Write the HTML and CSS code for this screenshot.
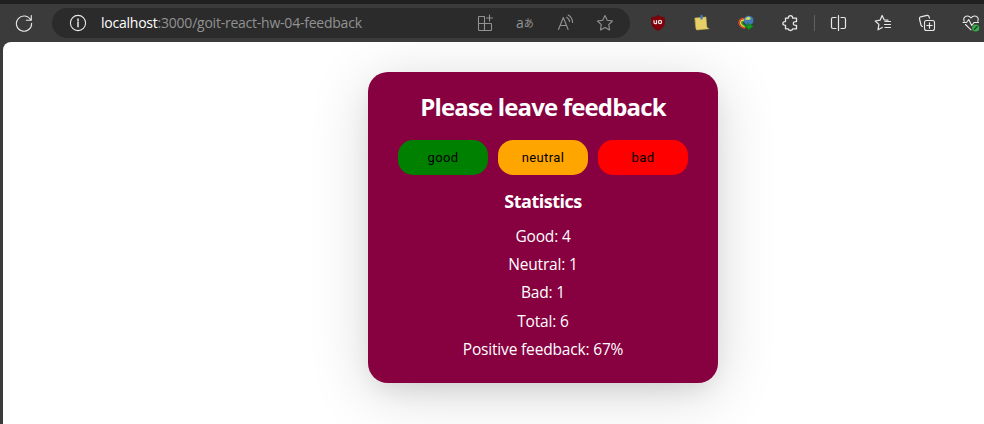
FILE: index.html
```html
<!DOCTYPE html>
<html lang="en">
<head>
<meta charset="utf-8">
<title>Feedback</title>
<link rel="stylesheet" href="styles.css">
</head>
<body>
<header class="toolbar">
  <svg class="icon reload" viewBox="0 0 18 18"><path d="M15.8 6.2A7.6 7.6 0 1 0 16.6 9.3M16.3 1.5v4.8h-5"/></svg>
  <div class="address">
    <svg class="icon info" viewBox="0 0 18 18"><circle cx="9" cy="9" r="7.6"/><path d="M9 8v4.8M9 5v1.4" stroke-width="1.5"/></svg>
    <span class="url"><b>localhost</b>:3000/goit-react-hw-04-feedback</span>
    <svg class="icon dim apps" viewBox="0 0 18 18"><path d="M8.500 2.500H3.200Q2.500 2.500 2.500 3.200V15.800q0 .7.700.7H14.800q.7 0 .7-.7V10.200q0-.7-.7-.7H2.500M8.500 2.500v14M13.500 1v6M10.500 4h6"/></svg>
    <span class="translate"><span>a</span><span class="kana">あ</span></span>
    <svg class="icon dim read" viewBox="0 0 18 18"><path d="M2.500 15.500 7.300 3.500l4.800 12M4.200 11.500h6.300M10.700 3.200q2.400 1.500 2.900 4.400M12.200 1q4 2.200 4.400 7.400"/></svg>
    <svg class="icon dim star" viewBox="0 0 18 18"><path d="m9 1.500 2.300 4.800 5.200.7-3.800 3.600.9 5.400L9 13.500 4.400 16l.9-5.400L1.500 7l5.200-.7Z"/></svg>
  </div>
  <div class="extensions">
    <svg class="icon" viewBox="0 0 18 18"><path d="M9 1.500q2.500 1.800 6.500 2v5.200q0 4.800-6.500 7.800-6.500-3-6.500-7.800V3.500Q6.500 3.300 9 1.500Z" fill="#800009" stroke="#6e0309" stroke-width=".5"/><path d="M5 6.500v2.100q0 1 1 1h1.500V6.500" stroke-width="1.200"/><circle cx="11" cy="8" r="1.600" stroke-width="1.200"/></svg>
    <svg class="icon" viewBox="0 0 18 18"><path d="m2 4 11-1 .8 9.500q.4 1.800 2.400 2.300L3.700 16q-1-1-1.100-3.500Z" fill="#e7cf68" stroke="#cdb34d" stroke-width=".5"/><path d="M8.500 2v2.500" stroke="#4276bd" stroke-width="2.300"/></svg>
    <svg class="icon" viewBox="0 0 18 18"><path d="M7.500 4.500Q2 4.500 1.900 9q1 4.300 6 5" stroke="#dd4926" stroke-width="1.400"/><path d="M7.500 6Q3.600 6 3.500 9q1 3 4.500 3.500" stroke="#edda40" stroke-width="1.300"/><path d="M7.500 7.300Q5 7.500 5 9.200q.8 2 3 2.300" stroke="#3aa43a"/><circle cx="11.700" cy="6.500" r="4.800" fill="#3f78b6" stroke="none"/><path d="M8.500 4.500q2-2.300 4-1.500l1.500 2-2.500 1-1.500-.5-1.500 1Z" fill="#c9dd69" stroke="none"/><path d="M6.500 9.500q1.500 2 4.200 2.200V9.300l5.800 3-5.500 3.900v-2q-3.700-.7-4.500-4.700Z" fill="#149b20" stroke="#08710f" stroke-width=".5"/></svg>
    <svg class="icon" viewBox="0 0 18 18"><path d="M4.500 4.200h2.800q.1-2.500 2.200-2.500t2.200 2.500h3.800v3.500q-3.200-.4-3.200 1.800t3.200 1.800v3.500h-3.800q-.1 1.700-2.200 1.700t-2.200-1.700H4.500v-3.500q-2.600 0-2.600-1.900T4.500 7.600Z" stroke-width="1.300"/></svg>
  </div>
  <i class="divider"></i>
  <div class="actions">
    <svg class="icon" viewBox="0 0 18 18"><path d="M8.500 1.500v15M6 3.500H3q-1.500 0-1.500 1.500v8q0 1.500 1.500 1.500h3M11 3.500h3q1.500 0 1.500 1.500v8q0 1.500-1.500 1.500h-3" stroke-width="1.200"/></svg>
    <svg class="icon" viewBox="0 0 18 18"><path d="m14 6.200-3.700-.2-2.200-4.500L6.100 6.200 1.200 7l3.700 3.400-.9 5.400 4.300-2.300M11 7.500h5.500M10.500 10.500h6M11 13.500h5.500" stroke-width="1.200"/></svg>
    <svg class="icon" viewBox="0 0 18 18"><rect x="6.500" y="6.500" width="10" height="10" rx="2"/><path d="M11.500 8.800v5.400M8.800 11.500h5.400M4.500 12.500q-1.200-.2-1.500-1.500L1.500 5q-.3-1.700 1.200-2.200L9 1.400q1.600-.3 2 1.200l.4 1.500" stroke-width="1.200"/></svg>
    <svg class="icon" viewBox="0 0 18 18"><path d="M2.200 7.200Q.8 3.500 4 2.200q3-1 5 1.800 2-2.800 5-1.800 3.200 1.300 1.800 5M1 8.500h3.500L6.700 5.500l3 6L12 8.500h4.500M3.500 10.500 9 15.800"/><circle cx="13.700" cy="14" r="3.600" fill="#38a84b" stroke="none"/><path d="m12.300 15.300 2.800-2.800" stroke="#163b1b"/></svg>
  </div>
</header>
<main class="page">
  <section class="card">
    <h1>Please leave feedback</h1>
    <div class="buttons">
      <button class="good">good</button>
      <button class="neutral">neutral</button>
      <button class="bad">bad</button>
    </div>
    <h2>Statistics</h2>
    <ul>
      <li>Good: 4</li>
      <li>Neutral: 1</li>
      <li>Bad: 1</li>
      <li>Total: 6</li>
      <li>Positive feedback: 67%</li>
    </ul>
  </section>
</main>
</body>
</html>
```
FILE: styles.css
```css
* { box-sizing: border-box; }
body {
  margin: 0;
  height: 424px;
  overflow: hidden;
  background: #3b3b3b;
  font-family: "Open Sans", "Noto Sans", sans-serif;
}
.toolbar {
  display: flex;
  align-items: center;
  height: 42px;
  padding-left: 15px;
  border-top: 4px solid #202020;
}
.icon {
  display: block;
  flex: none;
  width: 18px;
  height: 18px;
  fill: none;
  stroke: #e8e8e8;
  stroke-width: 1.1;
  stroke-linecap: round;
  stroke-linejoin: round;
}
.dim { stroke: #929292; }
.address {
  display: flex;
  align-items: center;
  width: 578px;
  height: 30px;
  margin-left: 19px;
  padding-left: 17px;
  border-radius: 15px;
  background: #2b2b2b;
}
.url {
  width: 375px;
  margin-left: 14px;
  color: #929292;
  font-size: 14px;
  line-height: 20px;
  letter-spacing: -0.23px;
  white-space: nowrap;
}
.url b { color: #fff; font-weight: 400; }
.translate {
  display: flex;
  align-items: center;
  width: 18px;
  margin: 0 22px;
  color: #929292;
  font-size: 14px;
  line-height: 18px;
}
.kana { font-family: "Noto Sans CJK JP", sans-serif; font-size: 10px; }
.read { margin-right: 22px; }
.extensions { display: flex; gap: 26px; margin-left: 19px; }
.divider { width: 1px; height: 16px; margin-left: 15px; background: #606060; }
.actions { display: flex; gap: 26px; margin-left: 15px; }
.page {
  height: 382px;
  margin-left: 3px;
  padding: 30px 0 0 365px;
  border-radius: 8px 0 0;
  background: #fff;
  overflow: hidden;
}
.card {
  width: 350px;
  height: 311px;
  padding: 18px 30px;
  border-radius: 20px;
  background: #87003f;
  color: #fff;
  text-align: center;
  box-shadow: 0 10px 60px rgba(0, 0, 0, .16), 0 10px 25px -8px rgba(30, 30, 60, .12);
}
h1 {
  margin: 0 0 18px;
  font-size: 24px;
  line-height: 33px;
  height: 32px;
  letter-spacing: -0.85px;
  white-space: nowrap;
}
.buttons { display: flex; gap: 10px; }
button {
  width: 90px;
  height: 35px;
  padding: 0;
  border: 0;
  border-radius: 15px;
  color: #000;
  font: 400 13px Roboto, sans-serif;
  letter-spacing: .35px;
}
.good { background: #008000; }
.neutral { background: #ffa500; }
.bad { background: #f00; }
h2 {
  margin: 14px 0 9.5px;
  font-size: 18px;
  line-height: 25px;
  letter-spacing: -0.5px;
}
ul { margin: 0; padding: 0; list-style: none; }
li {
  height: 28.4px;
  font-size: 15.5px;
  line-height: 24px;
  letter-spacing: -0.17px;
  white-space: nowrap;
}
```
